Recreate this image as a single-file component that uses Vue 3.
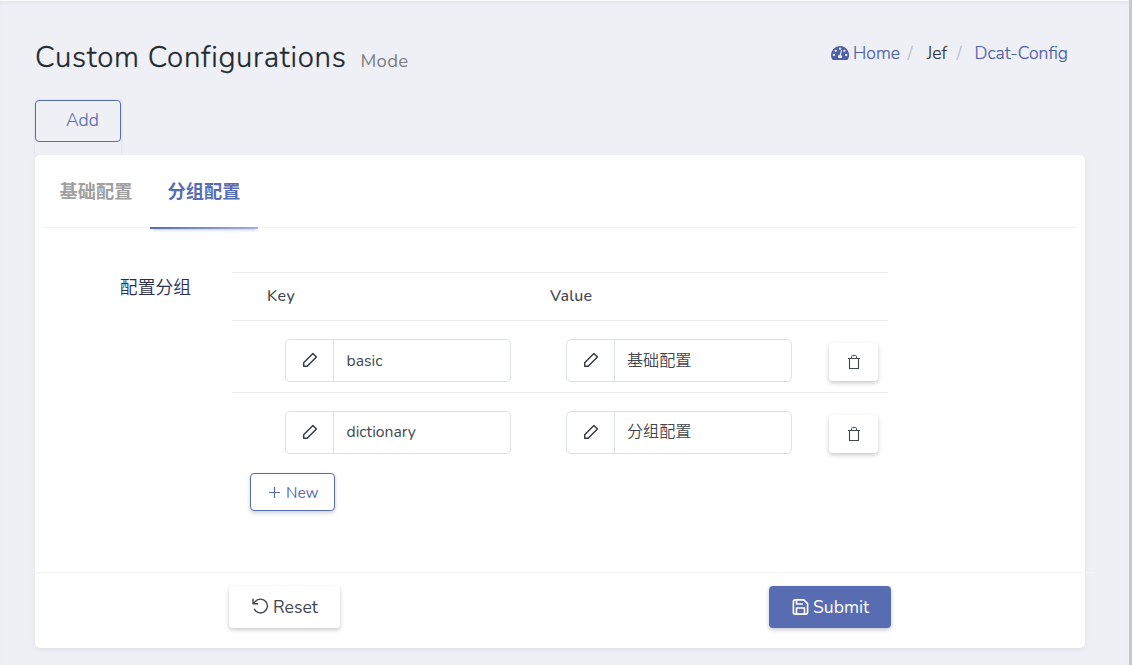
<script setup>
const rows = [
  { key: 'basic', value: '基础配置' },
  { key: 'dictionary', value: '分组配置' },
]
</script>

<template>
  <div class="page">
    <header class="head">
      <h1 class="title"><span class="main-title">Custom Configurations</span><small>Mode</small></h1>
      <nav class="crumbs">
        <svg class="dash" viewBox="0 0 18 14"><path fill="#4f5fa5" d="M9 0a9 9 0 0 0-9 9c0 1.700.45 3.200 1.200 4.500.2.300.5.500.9.500h13.800c.4 0 .7-.2.9-.5A9 9 0 0 0 9 0z" /><g fill="#eff0f6"><circle cx="2.900" cy="9" r="1.150" /><circle cx="4.700" cy="4.800" r="1.150" /><circle cx="9" cy="2.700" r="1.150" /><circle cx="13.400" cy="4.800" r="1.150" /><circle cx="15.200" cy="9" r="1.150" /><path d="M11.300 4l-1.500 5a2 2 0 0 1 .8 3H7.400a2 2 0 0 1 1.300-3.200l1.500-5.100z" /></g></svg>
        <a class="home">Home</a><i class="s1">/</i><span class="jef">Jef</span><i class="s2">/</i><a class="dcat">Dcat-Config</a>
      </nav>
    </header>

    <div class="tools"><button class="add">Add</button></div>

    <main class="card">
      <div class="tabs">
        <a class="tab">基础配置</a>
        <a class="tab active">分组配置</a>
      </div>
      <div class="form">
        <label>配置分组</label>
        <div class="table">
          <div class="thead"><span class="th-key">Key</span><span class="th-value">Value</span></div>
          <div v-for="row in rows" :key="row.key" class="tr">
            <div v-for="(text, name) in row" :key="name" class="field">
              <span class="pre">
                <svg viewBox="0 0 16 16"><path d="M1.700 14.300V10.800L10.900 1.600 14.400 5.100 5.200 14.300z" fill="none" stroke="#353a40" stroke-width="1.450" stroke-linejoin="round" /></svg>
              </span>
              <span class="val" :class="name">{{ text }}</span>
            </div>
            <button class="trash">
              <svg viewBox="0 0 12 14"><path d="M0 3.500h12M1.500 3.500v10h9v-10" fill="none" stroke="#414750" stroke-width="1.100" stroke-linejoin="round" /><path d="M3.500 3.500V1.600Q3.500.6 4.500.6h3q1 0 1 1v1.900" fill="none" stroke="#414750" stroke-width="1" /></svg>
            </button>
          </div>
          <button class="new">
            <svg viewBox="0 0 11 11"><path d="M5.500 0v11M0 5.500h11" stroke="#586cb1" stroke-width="1.200" /></svg>
            <span>New</span>
          </button>
        </div>
      </div>
      <footer class="foot">
        <button class="reset">
          <svg viewBox="0 0 17 16"><path d="M1 .8v5h5M1.300 5.500l2.200-2.200a6.900 6.900 0 1 1-1.300 7.500" fill="none" stroke="#414750" stroke-width="1.400" /></svg>
          <span>Reset</span>
        </button>
        <button class="submit">
          <svg viewBox="0 0 16 16"><path d="M2.500.9h8.700l3.900 3.700v8.900a1.600 1.600 0 0 1-1.600 1.600h-11A1.600 1.600 0 0 1 .9 13.500v-11A1.600 1.600 0 0 1 2.500.9zM4 1v4h6.500M4 15V9h8v6" fill="none" stroke="#fff" stroke-width="1.650" stroke-linejoin="round" /></svg>
          <span>Submit</span>
        </button>
      </footer>
    </main>
  </div>
</template>

<style>
body { background: #eff0f6; overflow: hidden; }
</style>

<style scoped>
* { box-sizing: border-box; }
.page {
  height: 665px; padding: 0 44px 0 35px; background: #eff0f6;
  border-right: 3px solid #c8c8c8;
  box-shadow: inset 0 1px #fbfbfd, inset 0 5px 5px -3px #dfe0e6;
  font-family: Nunito, Lato, "Noto Sans CJK SC", sans-serif; font-size: 15.500px; color: #414750;
}
button { font-family: inherit; background: #fff; padding: 0; margin: 0; border: 0; border-radius: 4px; display: flex; align-items: center; }
span, a, small, i { white-space: nowrap; }
svg { display: block; flex: none; }
.head { height: 100px; display: flex; align-items: flex-start; }
.title { margin: 37px 0 0; font-size: 29.500px; line-height: 40px; font-weight: 300; color: #22292f; display: flex; align-items: baseline; }
.main-title { width: 325.500px; letter-spacing: .67px; -webkit-text-stroke: .3px; }
.title small { font-size: 18.500px; font-weight: 400; color: #7c7e82; letter-spacing: .3px; }
.crumbs { margin: 41px 17px 0 auto; height: 24px; display: flex; align-items: center; font-size: 17.600px; font-weight: 300; -webkit-text-stroke: .2px; color: #4b5fa8; width: 237px; }
.dash { width: 18px; height: 14px; margin-right: 4px; }
.home { width: 55px; }
.jef { width: 30px; color: #303640; }
.crumbs i { font-style: normal; color: #b8c2cc; }
.s1 { width: 19px; }
.s2 { width: 18px; }
.tools { height: 55px; display: flex; }
.add { width: 86px; height: 55px; border-radius: 4px 4px 0 0; background: none; position: relative; align-items: flex-start; padding: 10px 0 0 31px; font-size: 17.600px; font-weight: 300; -webkit-text-stroke: .15px; line-height: 20px; color: #586cb1; box-shadow: 0 0 3px #d3d5dd; }
.add::before { content: ""; position: absolute; inset: 0 0 13px; border: 1px solid #586cb1; border-radius: 4px; }
.card { position: relative; width: 1050px; height: 493px; background: #fff; border-radius: 5px; box-shadow: 0 2px 4px #dfe0e8; display: flex; flex-direction: column; }
.tabs { height: 73px; margin: 0 7px; border-bottom: 1px solid #f2f2f3; display: flex; }
.tab { width: 108px; height: 74px; text-align: center; font-size: 18.200px; line-height: 74px; font-weight: 700; color: #a0a0a0; }
.active { color: #586cb1; background: linear-gradient(90deg, #586cb1, #a6b0d7) bottom / 100% 2px no-repeat; box-shadow: 0 3px 3px -2px #c3cae4; }
.form { flex: 1; display: flex; }
.form label { width: 156px; margin: 47px 41px 0 0; text-align: right; font-size: 17.800px; line-height: 26px; font-weight: 350; color: #2b2f4c; }
.table { width: 656px; margin-top: 44px; }
.thead { height: 49px; border: solid #ededf0; border-width: 1px 0; display: flex; align-items: center; padding: 0 0 2px 35px; font-size: 16px; font-weight: 500; }
.th-key { width: 283px; letter-spacing: .5px; }
.th-value { letter-spacing: .25px; }
.tr { height: 72px; padding: 18px 10px 0 53px; display: flex; }
.tr:nth-child(2) { border-bottom: 1px solid #ededf0; }
.field { width: 226px; height: 43px; margin-right: 55px; border: 1px solid #dbe1e4; border-radius: 5px; display: flex; }
.field + .field { margin-right: 37px; }
.pre { width: 48px; border-right: 1px solid #dbe1e4; display: flex; align-items: center; justify-content: center; padding-bottom: 1px; }
.pre svg { width: 16px; height: 16px; }
.val { padding-left: 12.500px; line-height: 43px; font-size: 15.700px; font-weight: 400; }
.tr:nth-child(3) .val { line-height: 41px; }
.val.value { padding-left: 12px; font-size: 16.100px; font-weight: 350; }
.trash { width: 49px; height: 38px; margin-top: 4px; justify-content: center; box-shadow: 0 2px 4px #c9c9cc; }
.trash svg { width: 12px; height: 14px; }
.new { width: 85px; height: 38px; margin: 8px 0 0 18px; border: 1px solid #586cb1; padding-left: 18px; font-size: 15.500px; font-weight: 400; color: #586cb1; box-shadow: 0 2px 4px #d0d1d8; }
.new svg { width: 11px; height: 11px; margin-right: 6px; }
.foot { width: 1061px; height: 76px; border-top: 1px solid #f3f3f5; padding: 13px 205px 0 194px; display: flex; justify-content: space-between; }
.reset { width: 111px; height: 42px; padding-left: 23px; font-size: 17.600px; color: #414750; box-shadow: 0 2px 4px #c9c9cc; }
.reset svg { width: 17px; height: 16px; margin: 0 4px 2px 0; }
.submit { width: 122px; height: 42px; padding-left: 23px; background: #586cb1; font-size: 17.600px; color: #fff; box-shadow: 0 2px 4px #c5c8d4; }
.submit svg { width: 17px; height: 16px; margin: 0 4px 1px 0; }
</style>
